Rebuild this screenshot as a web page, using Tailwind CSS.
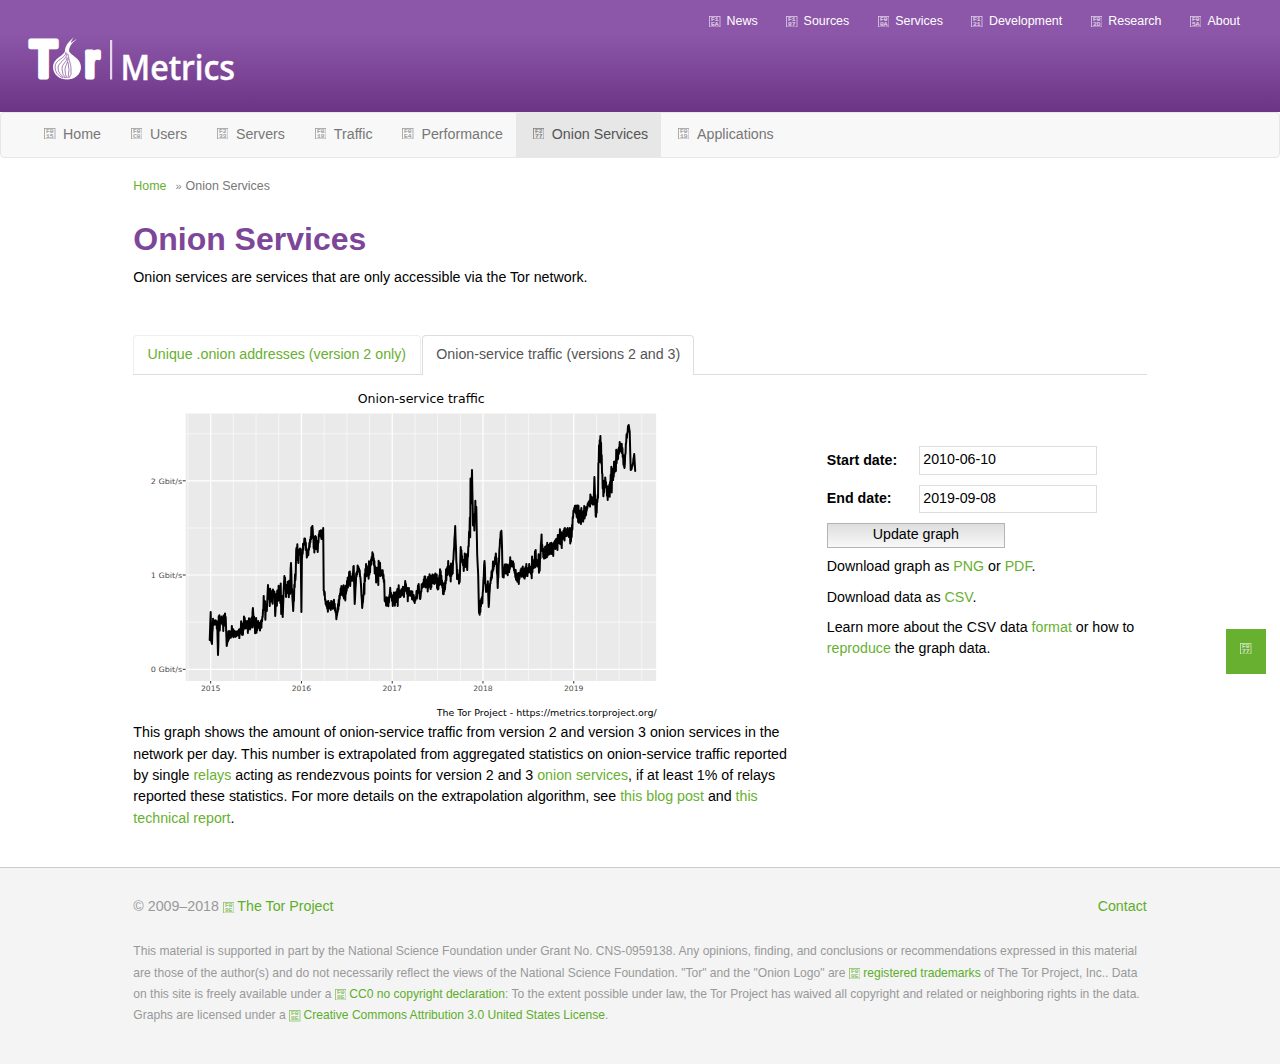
<!DOCTYPE html>
<html lang="en">
<head>
<meta charset="utf-8">
<title>Onion Services – Tor Metrics</title>
<script src="https://cdn.jsdelivr.net/npm/@tailwindcss/browser@4"></script>
</head>
<body class="bg-white text-black font-['Liberation_Sans',sans-serif] text-[14.22px] leading-[21.33px] w-[1280px] h-[1064px] overflow-hidden whitespace-nowrap">
<div class="flex flex-col h-[1064px]">

<header class="h-[112px] shrink-0 flex justify-between bg-linear-to-b from-[#8d57a9] from-30% to-[#6c3485]">
  <svg class="w-[245px] h-[112px]" viewBox="0 0 245 112" fill="#fff">
    <g font-family="Liberation Sans" font-weight="700" stroke="#fff" stroke-linejoin="round">
      <text x="30" y="77.200" font-size="51" stroke-width="5" textLength="27" lengthAdjust="spacingAndGlyphs">T</text>
      <text x="84.500" y="77.200" font-size="47" stroke-width="5" textLength="15" lengthAdjust="spacingAndGlyphs">r</text>
    </g>
    <path d="M65 51C65 47 67 43 74 37C71 41 71 42 71 43C73 41 75 40 77 39C73 42 69 46 69 51C70 55 81 58 81 67C81 75 74 79.500 67 79.500S53 75 53 67C53 58 64 56 65 51Z"/>
    <g fill="none" stroke="#7d4798" stroke-width=".7">
      <path d="M66 52C66 59 55 59 55 67Q55 74 63 78"/>
      <path d="M67 53C67 60 58 62 58 68Q58 74 65 78"/>
      <path d="M67 57C67 63 62 63 62 69Q62 75 66 78"/>
      <path d="M68 58C68 64 65 65 65 70Q65 75 67 78"/>
      <path d="M68 54C69 61 71 64 71 69Q72 75 69 78"/>
      <path d="M68 62Q70 70 68 78"/>
    </g>
    <rect x="110" y="40" width="2.200" height="39.500" fill="#e4d8ea"/>
    <text x="120.500" y="79.500" font-family="Noto Sans" font-weight="500" font-size="34" stroke="#fff" stroke-width=".5" textLength="114.500" lengthAdjust="spacingAndGlyphs">Metrics</text>
  </svg>
  <nav class="flex items-start gap-[28.500px] pr-10 pt-[11px] text-[12.44px] text-white">
    <a class="flex gap-[6px]"><i data-code="F1EA"></i>News</a>
    <a class="flex gap-[6px]"><i data-code="F187"></i>Sources</a>
    <a class="flex gap-[6px]"><i data-code="F00A"></i>Services</a>
    <a class="flex gap-[6px]"><i data-code="F121"></i>Development</a>
    <a class="flex gap-[6px]"><i data-code="F02D"></i>Research</a>
    <a class="flex gap-[6px]"><i data-code="F05A"></i>About</a>
  </nav>
</header>

<nav class="h-[46px] shrink-0 flex border border-[#e7e7e7] rounded-[4px] bg-[#f8f8f8] pl-[26.500px] text-[#777] leading-[42px]">
  <a class="flex gap-[7.600px] pl-[16.500px] pr-[13.300px]"><i data-code="F015"></i>Home</a>
  <a class="flex gap-[7.600px] pl-[16.500px] pr-[13.300px]"><i data-code="F0C0"></i>Users</a>
  <a class="flex gap-[7.600px] pl-[16.500px] pr-[13.300px]"><i data-code="F233"></i>Servers</a>
  <a class="flex gap-[7.600px] pl-[16.500px] pr-[13.300px]"><i data-code="F018"></i>Traffic</a>
  <a class="flex gap-[7.600px] pl-[16.500px] pr-[13.300px]"><i data-code="F0E4"></i>Performance</a>
  <a class="flex gap-[7.600px] pl-[16.500px] pr-[13.300px] bg-[#e7e7e7] text-[#555]"><i data-code="F277"></i>Onion Services</a>
  <a class="flex gap-[7.600px] pl-[16.500px] pr-[13.300px]"><i data-code="F019"></i>Applications</a>
</nav>

<main class="h-[708.500px] shrink-0 w-[1013.300px] ml-[133.300px] flex flex-col">
  <div class="pt-[18px] text-[12.44px] text-[#777] flex"><a class="text-[#68b030]">Home</a><span class="pl-[9px] pr-[4px] text-[11px] text-[#888]">»</span>Onion Services</div>
  <h1 class="mt-[23px] text-[32px] leading-[38px] font-bold text-[#7d4698]">Onion Services</h1>
  <p class="mt-[9px]">Onion services are services that are only accessible via the Tor network.</p>

  <div class="mt-[46.700px] h-[39.500px] flex border-b border-[#ddd]">
    <a class="h-[39px] w-[287.500px] border border-b-0 border-[#eee] rounded-t-[4px] pl-[13.300px] pt-[8px] text-[#68b030]">Unique .onion addresses (version 2 only)</a>
    <a class="ml-[1.500px] h-[40px] w-[272px] bg-white border border-b-0 border-[#ddd] rounded-t-[4px] pl-[13px] pt-[8px] text-[#555]">Onion-service traffic (versions 2 and 3)</a>
  </div>

  <div class="flex">
    <section class="w-[693.500px]">
      <svg id="chart" class="block mt-[12px] w-[534px] h-[335px]" viewBox="133.300 387 534 335" font-family="DejaVu Sans">
        <rect x="186" y="413.500" width="470.500" height="267.500" fill="#eaeaea"/>
        <g id="grid" stroke="#fff"></g>
        <path id="series" fill="none" stroke="#000" stroke-width="2" stroke-linejoin="round" stroke-linecap="round"/>
        <g font-size="7.400" fill="#4d4d4d">
          <text x="182.500" y="483.500" text-anchor="end" textLength="31.500" lengthAdjust="spacingAndGlyphs">2 Gbit/s</text>
          <text x="182.500" y="577.500" text-anchor="end" textLength="31.500" lengthAdjust="spacingAndGlyphs">1 Gbit/s</text>
          <text x="182.500" y="671.500" text-anchor="end" textLength="31.500" lengthAdjust="spacingAndGlyphs">0 Gbit/s</text>
          <g id="years" text-anchor="middle"></g>
        </g>
        <text x="358" y="402.500" font-size="12" textLength="127" lengthAdjust="spacingAndGlyphs">Onion-service traffic</text>
        <text x="437" y="715.500" font-size="9.100" textLength="220" lengthAdjust="spacingAndGlyphs">The Tor Project - https://metrics.torproject.org/</text>
      </svg>
      <p class="pt-[0.600px]">This graph shows the amount of onion-service traffic from version 2 and version 3 onion services in the<br>network per day. This number is extrapolated from aggregated statistics on onion-service traffic reported<br>by single <a class="text-[#68b030]">relays</a> acting as rendezvous points for version 2 and 3 <a class="text-[#68b030]">onion services</a>, if at least 1% of relays<br>reported these statistics. For more details on the extrapolation algorithm, see <a class="text-[#68b030]">this blog post</a> and <a class="text-[#68b030]">this<br>technical report</a>.</p>
    </section>
    <section class="pt-[71.500px] flex flex-col">
      <div class="flex items-center mb-[10px]"><label class="w-[92.500px] font-bold">Start date:</label><div class="w-[178px] h-[28.500px] border border-[#ddd] pl-[3px] leading-[25px]">2010-06-10</div></div>
      <div class="flex items-center mb-[9.500px]"><label class="w-[92.500px] font-bold">End date:</label><div class="w-[178px] h-[28.500px] border border-[#ddd] pl-[3px] leading-[25px]">2019-09-08</div></div>
      <button class="w-[178px] h-[25px] border border-[#b4b4b4] bg-linear-to-b from-[#dedede] to-[#f8f8f8] leading-[21px] pb-[2px] mb-[8.500px]">Update graph</button>
      <p class="mb-[9px]">Download graph as <a class="text-[#68b030]">PNG</a> or <a class="text-[#68b030]">PDF</a>.</p>
      <p class="mb-[9px]">Download data as <a class="text-[#68b030]">CSV</a>.</p>
      <p>Learn more about the CSV data <a class="text-[#68b030]">format</a> or how to<br><a class="text-[#68b030]">reproduce</a> the graph data.</p>
    </section>
  </div>
</main>

<footer class="grow border-t border-[#ccc] bg-[#f4f4f4] pl-[133.300px] pr-[133.300px] pt-[28px] text-[#999]">
  <div class="flex justify-between">
    <span>© 2009–2018 <a class="text-[#5dae2a]"><i data-code="F08E"></i>The Tor Project</a></span>
    <a class="text-[#5dae2a]">Contact</a>
  </div>
  <p class="mt-[24.500px] text-[12.085px]">This material is supported in part by the National Science Foundation under Grant No. CNS-0959138. Any opinions, finding, and conclusions or recommendations expressed in this material<br>are those of the author(s) and do not necessarily reflect the views of the National Science Foundation. "Tor" and the "Onion Logo" are <a class="text-[#5dae2a]"><i data-code="F08E"></i>registered trademarks</a> of The Tor Project, Inc.. Data<br>on this site is freely available under a <a class="text-[#5dae2a]"><i data-code="F08E"></i>CC0 no copyright declaration</a>: To the extent possible under law, the Tor Project has waived all copyright and related or neighboring rights in the data.<br>Graphs are licensed under a <a class="text-[#5dae2a]"><i data-code="F08E"></i>Creative Commons Attribution 3.0 United States License</a>.</p>
</footer>
</div>

<a class="fixed left-[1226px] top-[628.500px] w-[40px] h-[45px] bg-[#68b030] text-white flex items-start justify-center pt-[14px]"><i data-code="F077"></i></a>

<script>
// Boxed four-digit icon codes
document.querySelectorAll('i[data-code]').forEach(function (el) {
  var c = el.dataset.code, inFooter = !!el.closest('footer'), inMenu = !!el.closest('header + nav');
  el.className = inFooter ? 'inline-block align-[-2px] not-italic h-[11px] mr-[3px]' : inMenu ? 'mt-[14.500px] not-italic' : el.closest('header') ? 'mt-[4.500px] not-italic' : 'not-italic';
  el.innerHTML = '<svg class="w-[11.500px] h-[11.500px] block opacity-70" viewBox="0 0 11.5 11.5" fill="currentColor" font-family="Liberation Mono" font-size="5.2" stroke="currentColor">' +
    '<rect x=".5" y=".5" width="10.5" height="10.5" fill="none" stroke-width=".8"/>' +
    '<text x="2" y="5.1" stroke-width=".2" textLength="7.500" lengthAdjust="spacingAndGlyphs">' + c.slice(0, 2) + '</text><text x="2" y="10" stroke-width=".2" textLength="7.500" lengthAdjust="spacingAndGlyphs">' + c.slice(2) + '</text></svg>';
});

// Grid, ticks and year labels
var g = '', ticks = '', x, k;
[433.8, 528, 622.2].forEach(function (y) { g += '<path stroke-width=".6" d="M186 ' + y + 'H656.5"/>'; });
for (k = -1; k < 20; k++) {
  x = 211 + k * 22.69;
  g += '<path stroke-width="' + (k % 4 ? 0.6 : 1.2) + '" d="M' + x + ' 413.5V681"/>';
  if (k % 4 === 0) {
    g += '<path stroke="#333" d="M' + x + ' 681v2.500"/>';
    ticks += '<text x="' + x + '" y="691" textLength="19.500" lengthAdjust="spacingAndGlyphs">' + (2015 + k / 4) + '</text>';
  }
}
[480.8, 575, 669.3].forEach(function (y) { g += '<path stroke-width="1.2" d="M186 ' + y + 'H656.5"/><path stroke="#333" d="M183 ' + y + 'h3"/>'; });
document.getElementById('grid').innerHTML = g;
document.getElementById('years').innerHTML = ticks;

// Daily traffic: x, y, spread around the line
var pts = [[210,640,0],[211,612,0],[211.500,641,0],[212.300,644,0],[213,624,6],[217.500,622,0],[218.300,655,0],[219,620,6],[225,622,6],[226,617,0],[227,646,0],[228,640,0],[229,633,4],[236,634,5],[240,631,4],[245,625,6],[252.500,622,5],[253.200,608,0],[254,623,6],[261,625,6],[263,617,0],[264,600,5],[266,611,8],[267.500,602,0],[268.300,585,0],[269,597,7],[275,594,5],[275.500,616,0],[276.500,596,6],[281,594,6],[281.500,614,0],[282.300,596,0],[283,617,0],[284,590,0],[284.700,576,0],[286,590,7],[290.500,586,7],[291.300,563,0],[292,585,3],[293.500,611,0],[295,578,6],[296,575,0],[296.500,550,0],[298,556,8],[301,549,0],[301.700,612,0],[302.200,560,0],[303,552,6],[305,538,5],[307.500,556,3],[310,545,5],[312.700,526,0],[314,545,6],[316,537,7],[318,550,5],[319.500,532,5],[322,536,8],[323.500,528,0],[324,590,2],[326,603,4],[330,607,4],[335,607,4],[337,616,0],[339,605,4],[341,590,5],[346,594,5],[348,583,6],[353,577,5],[354,566,0],[355,604,0],[356.500,575,4],[359,567,2],[361,580,2],[362.500,608,0],[364,594,2],[366,572,8],[370,567,9],[373.400,554,0],[375,570,9],[380,573,8],[383,573,5],[384.500,580,0],[385,600,3],[389,603,3],[390.500,590,3],[392,598,5],[397,599,5],[400,593,6],[405,589,3],[405.500,581,0],[407,592,5],[412,594,6],[415,602,3],[419,588,3],[420.500,599,0],[422,586,5],[428,583,5],[432,581,4],[436,578,6],[438,588,5],[441,573,6],[444,593,2],[447,576,8],[448.500,561,0],[450,574,8],[453,572,3],[455.500,526,0],[457,571,5],[460,582,0],[461,547,0],[463,563,8],[467.500,565,7],[469,545,5],[470.500,515,18],[471.500,490,12],[472.300,470,0],[473.300,523,3],[475,517,10],[476.600,507,0],[477.500,555,0],[478.500,575,0],[479.300,613,0],[481,605,4],[483,595,5],[484.800,561,0],[486,590,6],[488.500,588,4],[489,607,0],[490,590,3],[491.500,575,3],[494,567,5],[496.500,553,5],[498,588,0],[500,545,4],[501,532,0],[502,535,4],[503,578,2],[505,566,4],[508,568,5],[513,563,6],[515,572,2],[518,579,4],[522,570,5],[527,572,5],[532,568,6],[536,562,8],[540,565,6],[541.500,541,0],[544,555,9],[550,552,6],[556,542,8],[562,538,6],[568,531,7],[572,535,6],[573,520,4],[574.500,508,0],[577,514,5],[582,516,6],[586,513,4],[588,505,4],[591,500,5],[594,500,2],[594.700,477,0],[596,516,0],[598,497,6],[599,458,12],[600.700,436,0],[602,460,12],[603,485,5],[604,493,3],[605.500,479,3],[608,493,5],[611,482,8],[614,472,8],[618,456,7],[620,446,5],[622,446,7],[624.800,468,0],[626.500,440,3],[629,425,0],[630,432,0],[631,470,0],[633,465,2],[634.500,454,0],[635.500,471,0]];
var seed = 29, d = 'M' + pts[0][0] + ' ' + pts[0][1], sign = 1;
function rnd() { seed = (seed * 16807) % 2147483647; return seed / 2147483647; }
for (k = 1; k < pts.length; k++) {
  var a = pts[k - 1], b = pts[k], n = Math.max(1, Math.round((b[0] - a[0]) / 0.35));
  for (var j = 1; j <= n; j++) {
    var t = j / n, amp = a[2] + (b[2] - a[2]) * t;
    // keep some spread between two isolated peaks
    if (j < n) amp = Math.max(amp, Math.max(a[2], b[2]) * 0.7);
    sign = -sign;
    // mostly small swings with an occasional long one
    d += 'L' + (a[0] + (b[0] - a[0]) * t).toFixed(2) + ' ' + (a[1] + (b[1] - a[1]) * t + sign * amp * (0.3 + 1.5 * Math.pow(rnd(), 2.5))).toFixed(1);
  }
}
document.getElementById('series').setAttribute('d', d);
</script>
</body>
</html>
